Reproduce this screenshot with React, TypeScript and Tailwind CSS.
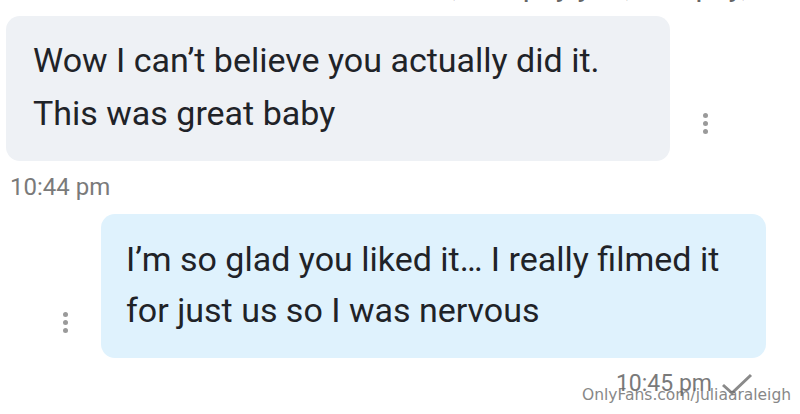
import React from "react";

function Kebab() {
  return (
    <div className="flex flex-col items-center gap-[3px]">
      <div className="w-[5px] h-[5px] rounded-full bg-[#9a9a9a]" />
      <div className="w-[5px] h-[5px] rounded-full bg-[#9a9a9a]" />
      <div className="w-[5px] h-[5px] rounded-full bg-[#9a9a9a]" />
    </div>
  );
}

export default function App() {
  return (
    <div className="w-[800px] h-[414px] bg-white overflow-hidden relative" style={{ fontFamily: "Roboto, 'Liberation Sans', sans-serif" }}>
      <div className="h-[16px] overflow-hidden relative">
        <div className="absolute left-[420px] top-[-37px] text-[#666] text-[30px] whitespace-nowrap">
          ea, and pay you, and pay,
        </div>
      </div>
      <div className="flex items-end pl-[6px]">
        <div className="w-[664px] h-[145px] bg-[#eef1f5] rounded-[14px] pl-[27px] pt-[18px] text-[34px] leading-[53px] text-[#1f2328]">
          <div>Wow I can’t believe you actually did it.</div>
          <div>This was great baby</div>
        </div>
        <div className="ml-[33px] mb-[27px]"><Kebab /></div>
      </div>
      <div className="pl-[10px] pt-[13px] text-[24px] leading-[26px] text-[#7a7a7a]">10:44 pm</div>
      <div className="flex items-end mt-[14px]">
        <div className="w-[101px] flex justify-center pb-[25px] pl-[30px]"><Kebab /></div>
        <div className="w-[665px] h-[144px] bg-[#dff2fd] rounded-[14px] pl-[25px] pt-[20px] text-[34px] leading-[51px] text-[#1f2328]">
          <div>I’m so glad you liked it… I really filmed it</div>
          <div>for just us so I was nervous</div>
        </div>
      </div>
      <div className="flex justify-end items-center pr-[46px] pt-[13px] gap-[8px] text-[23px] leading-[26px] text-[#7a7a7a]">
        <span>10:45 pm</span>
        <svg width="34" height="24" viewBox="0 0 34 24">
          <path d="M3 13 L12 21 L31 3" stroke="#8a8a8a" strokeWidth="3" fill="none" />
        </svg>
      </div>
      <div className="absolute left-[582px] top-[384px] text-[15.5px] text-[#6a6a6a] opacity-80 whitespace-nowrap" style={{ fontFamily: "'DejaVu Sans', sans-serif" }}>
        OnlyFans.com/juliaaraleigh
      </div>
    </div>
  );
}
